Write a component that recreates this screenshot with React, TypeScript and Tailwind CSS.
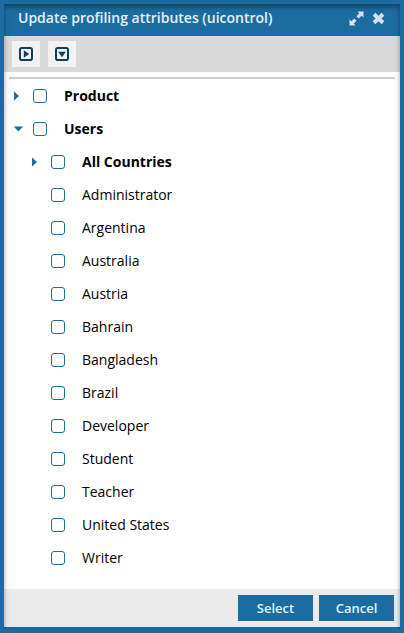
type Item = { label: string; level: number; arrow?: 'right' | 'down' };

const items: Item[] = [
  { label: 'Product', level: 0, arrow: 'right' },
  { label: 'Users', level: 0, arrow: 'down' },
  { label: 'All Countries', level: 1, arrow: 'right' },
  { label: 'Administrator', level: 1 },
  { label: 'Argentina', level: 1 },
  { label: 'Australia', level: 1 },
  { label: 'Austria', level: 1 },
  { label: 'Bahrain', level: 1 },
  { label: 'Bangladesh', level: 1 },
  { label: 'Brazil', level: 1 },
  { label: 'Developer', level: 1 },
  { label: 'Student', level: 1 },
  { label: 'Teacher', level: 1 },
  { label: 'United States', level: 1 },
  { label: 'Writer', level: 1 },
];

function ToolButton({ dir }: { dir: 'right' | 'down' }) {
  return (
    <button className="flex h-[26px] w-7 items-center justify-center bg-[#f2f2f2]">
      <svg width="14" height="14" viewBox="0 0 14 14">
        <rect x="1" y="1" width="12" height="12" rx="1.8" fill="none" stroke="#0d3f60" strokeWidth="2" />
        <path d={dir === 'right' ? 'M4.8 3.2L10.2 7L4.8 10.8Z' : 'M3.2 4.8H10.8L7 10.2Z'} fill="#0d3f60" />
      </svg>
    </button>
  );
}

function Row({ item }: { item: Item }) {
  return (
    <li className={`flex h-[33px] items-center ${item.level ? 'pl-[27px]' : 'pl-[9px]'}`}>
      <span className="flex w-5 shrink-0">
        {item.arrow && (
          <svg width="10" height="10" viewBox="0 0 10 10">
            <path d={item.arrow === 'right' ? 'M1 0.5L6 5L1 9.5Z' : 'M0.8 2.6H10L5.4 7.6Z'} fill="#1b6ca0" />
          </svg>
        )}
      </span>
      <span className="size-[14px] shrink-0 rounded-[3px] border border-[#1b6ca0] bg-white" />
      <span className={`ml-[17px] text-sm text-black ${item.arrow ? 'font-bold' : ''}`}>{item.label}</span>
    </li>
  );
}

export default function App() {
  return (
    <div className="h-[633px] w-[404px] bg-[#1b6ca0] px-1 pt-1 font-['Open_Sans',sans-serif]">
      <div className="relative flex h-[625px] flex-col">
        <header className="flex h-8 items-center justify-between pr-[15px] pl-[14px]">
          <h1 className="-mt-[5px] text-sm font-semibold whitespace-nowrap text-[#e8f0f5]">
            Update profiling attributes (uicontrol)
          </h1>
          <div className="-mt-[3px] flex items-center gap-2">
            <svg width="15" height="15" viewBox="0 0 15 15" fill="#d3e3ed">
              <path d="M8.5 0.5H14.5V6.5L12.6 4.8L9.7 7.6L7.4 5.3L10.2 2.4Z" />
              <path d="M6.5 14.5H0.5V8.5L2.4 10.2L5.3 7.4L7.6 9.7L4.8 12.6Z" />
            </svg>
            <svg width="13" height="13" viewBox="0 0 13 13" fill="none" stroke="#d3e3ed" strokeWidth="4">
              <path d="M2 2.3L11 10.7M11 2.3L2 10.7" />
            </svg>
          </div>
        </header>
        <div className="flex h-9 items-center gap-2 bg-[#d9d9d9] pl-2">
          <ToolButton dir="right" />
          <ToolButton dir="down" />
        </div>
        <main className="h-[517px] bg-white pt-[5px]">
          <div className="mr-[5px] ml-[5px] h-[2px] bg-[#cecece]" />
          <ul>
            {items.map((item) => (
              <Row key={item.label} item={item} />
            ))}
          </ul>
        </main>
        <footer className="flex h-[38px] items-center justify-end gap-1.5 bg-[#ebebeb] pr-1.5">
          <button className="h-[26px] w-[75px] bg-[#1b6ca0] pt-px text-[13px] font-semibold text-[#e8f0f5]">Select</button>
          <button className="h-[26px] w-[75px] bg-[#1b6ca0] pt-px text-[13px] font-semibold text-[#e8f0f5]">Cancel</button>
        </footer>
        <div className="pointer-events-none absolute inset-0 shadow-[inset_0_3px_5px_rgba(0,0,0,0.38)]" />
      </div>
    </div>
  );
}
